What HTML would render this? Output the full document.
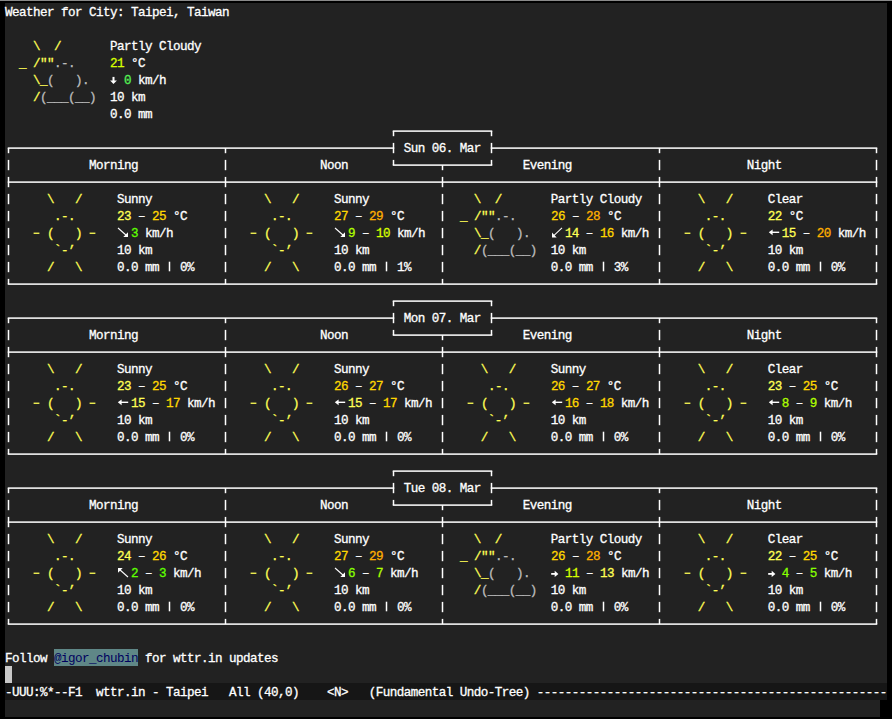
<!DOCTYPE html>
<html><head><meta charset="utf-8"><style>
html,body{margin:0;padding:0;}
body{width:892px;height:719px;background:#000;position:relative;overflow:hidden;}
#topl{position:absolute;left:0;top:0;width:892px;height:1px;background:#8a8a8a;}
#buf{position:absolute;left:5px;top:3px;width:882px;height:680px;background:#222222;}
#ml{position:absolute;left:5px;top:683px;width:882px;height:17px;background:#161616;}
#echo{position:absolute;left:5px;top:700px;width:875px;height:17px;background:#222222;}
#cur{position:absolute;left:5px;top:666px;width:7px;height:17px;background:#c8c8c8;}
#hl{position:absolute;left:54px;top:649px;width:84px;height:17px;background:#5f8787;}
.r{position:absolute;left:5px;height:17px;line-height:17px;white-space:pre;font-family:"Liberation Mono",monospace;font-size:12.6px;letter-spacing:-0.560px;color:#ffffff;font-weight:normal;-webkit-text-stroke:0.3px currentColor;}
.lk{color:#00005f;-webkit-text-stroke:0;}
#ml .r{}
svg{position:absolute;left:0;top:0;}
</style></head><body>
<div id="topl"></div><div id="buf"></div><div id="ml"></div><div id="echo"></div>
<div id="hl"></div><div id="cur"></div>
<div class="r" style="top:5px">Weather for City: Taipei, Taiwan</div>
<div class="r" style="top:39px"> <span style="color:#ffff55">   \  /      </span> Partly Cloudy</div>
<div class="r" style="top:56px"> <span style="color:#ffff55"> _ /&quot;&quot;</span><span style="color:#bcbcbc">.-.    </span> <span style="color:#d7ff00">21</span> °C</div>
<div class="r" style="top:73px"> <span style="color:#ffff55">   \_</span><span style="color:#bcbcbc">(   ).  </span>   <span style="color:#55f055">0</span> km/h</div>
<div class="r" style="top:90px"> <span style="color:#ffff55">   /</span><span style="color:#bcbcbc">(___(__) </span> 10 km</div>
<div class="r" style="top:107px"> <span style="color:#ffff55">             </span> 0.0 mm</div>
<div class="r" style="top:141px">                                                         Sun 06. Mar</div>
<div class="r" style="top:158px">            Morning                          Noon                         Evening                         Night</div>
<div class="r" style="top:192px">  <span style="color:#ffff55">    \   /    </span> Sunny            <span style="color:#ffff55">    \   /    </span> Sunny            <span style="color:#ffff55">   \  /      </span> Partly Cloudy    <span style="color:#ffff55">    \   /    </span> Clear</div>
<div class="r" style="top:209px">  <span style="color:#ffff55">     .-.     </span> <span style="color:#ffff55">23</span> – <span style="color:#ffd700">25</span> °C       <span style="color:#ffff55">     .-.     </span> <span style="color:#ffd700">27</span> – <span style="color:#ffaf00">29</span> °C       <span style="color:#ffff55"> _ /&quot;&quot;</span><span style="color:#bcbcbc">.-.    </span> <span style="color:#ffd700">26</span> – <span style="color:#ffaf00">28</span> °C       <span style="color:#ffff55">     .-.     </span> <span style="color:#ffff55">22</span> °C</div>
<div class="r" style="top:226px">  <span style="color:#ffff55">    (   )    </span>   <span style="color:#5fff00">3</span> km/h         <span style="color:#ffff55">    (   )    </span>   <span style="color:#afff00">9</span> – <span style="color:#d7ff00">10</span> km/h    <span style="color:#ffff55">   \_</span><span style="color:#bcbcbc">(   ).  </span>   <span style="color:#ffff55">14</span> – <span style="color:#ffd700">16</span> km/h   <span style="color:#ffff55">    (   )    </span>   <span style="color:#ffff55">15</span> – <span style="color:#ffaf00">20</span> km/h</div>
<div class="r" style="top:243px">  <span style="color:#ffff55">     `-’     </span> 10 km            <span style="color:#ffff55">     `-’     </span> 10 km            <span style="color:#ffff55">   /</span><span style="color:#bcbcbc">(___(__) </span> 10 km            <span style="color:#ffff55">     `-’     </span> 10 km</div>
<div class="r" style="top:260px">  <span style="color:#ffff55">    /   \    </span> 0.0 mm   0%      <span style="color:#ffff55">    /   \    </span> 0.0 mm   1%      <span style="color:#ffff55">             </span> 0.0 mm   3%      <span style="color:#ffff55">    /   \    </span> 0.0 mm   0%</div>
<div class="r" style="top:311px">                                                         Mon 07. Mar</div>
<div class="r" style="top:328px">            Morning                          Noon                         Evening                         Night</div>
<div class="r" style="top:362px">  <span style="color:#ffff55">    \   /    </span> Sunny            <span style="color:#ffff55">    \   /    </span> Sunny            <span style="color:#ffff55">    \   /    </span> Sunny            <span style="color:#ffff55">    \   /    </span> Clear</div>
<div class="r" style="top:379px">  <span style="color:#ffff55">     .-.     </span> <span style="color:#ffff55">23</span> – <span style="color:#ffd700">25</span> °C       <span style="color:#ffff55">     .-.     </span> <span style="color:#ffd700">26</span> – <span style="color:#ffd700">27</span> °C       <span style="color:#ffff55">     .-.     </span> <span style="color:#ffd700">26</span> – <span style="color:#ffd700">27</span> °C       <span style="color:#ffff55">     .-.     </span> <span style="color:#ffff55">23</span> – <span style="color:#ffd700">25</span> °C</div>
<div class="r" style="top:396px">  <span style="color:#ffff55">    (   )    </span>   <span style="color:#ffff55">15</span> – <span style="color:#ffd700">17</span> km/h   <span style="color:#ffff55">    (   )    </span>   <span style="color:#ffff55">15</span> – <span style="color:#ffd700">17</span> km/h   <span style="color:#ffff55">    (   )    </span>   <span style="color:#ffd700">16</span> – <span style="color:#ffd700">18</span> km/h   <span style="color:#ffff55">    (   )    </span>   <span style="color:#afff00">8</span> – <span style="color:#afff00">9</span> km/h</div>
<div class="r" style="top:413px">  <span style="color:#ffff55">     `-’     </span> 10 km            <span style="color:#ffff55">     `-’     </span> 10 km            <span style="color:#ffff55">     `-’     </span> 10 km            <span style="color:#ffff55">     `-’     </span> 10 km</div>
<div class="r" style="top:430px">  <span style="color:#ffff55">    /   \    </span> 0.0 mm   0%      <span style="color:#ffff55">    /   \    </span> 0.0 mm   0%      <span style="color:#ffff55">    /   \    </span> 0.0 mm   0%      <span style="color:#ffff55">    /   \    </span> 0.0 mm   0%</div>
<div class="r" style="top:481px">                                                         Tue 08. Mar</div>
<div class="r" style="top:498px">            Morning                          Noon                         Evening                         Night</div>
<div class="r" style="top:532px">  <span style="color:#ffff55">    \   /    </span> Sunny            <span style="color:#ffff55">    \   /    </span> Sunny            <span style="color:#ffff55">   \  /      </span> Partly Cloudy    <span style="color:#ffff55">    \   /    </span> Clear</div>
<div class="r" style="top:549px">  <span style="color:#ffff55">     .-.     </span> <span style="color:#ffff55">24</span> – <span style="color:#ffd700">26</span> °C       <span style="color:#ffff55">     .-.     </span> <span style="color:#ffd700">27</span> – <span style="color:#ffaf00">29</span> °C       <span style="color:#ffff55"> _ /&quot;&quot;</span><span style="color:#bcbcbc">.-.    </span> <span style="color:#ffd700">26</span> – <span style="color:#ffaf00">28</span> °C       <span style="color:#ffff55">     .-.     </span> <span style="color:#ffff55">22</span> – <span style="color:#ffd700">25</span> °C</div>
<div class="r" style="top:566px">  <span style="color:#ffff55">    (   )    </span>   <span style="color:#5fff00">2</span> – <span style="color:#5fff00">3</span> km/h     <span style="color:#ffff55">    (   )    </span>   <span style="color:#87ff00">6</span> – <span style="color:#afff00">7</span> km/h     <span style="color:#ffff55">   \_</span><span style="color:#bcbcbc">(   ).  </span>   <span style="color:#d7ff00">11</span> – <span style="color:#ffff55">13</span> km/h   <span style="color:#ffff55">    (   )    </span>   <span style="color:#87ff00">4</span> – <span style="color:#87ff00">5</span> km/h</div>
<div class="r" style="top:583px">  <span style="color:#ffff55">     `-’     </span> 10 km            <span style="color:#ffff55">     `-’     </span> 10 km            <span style="color:#ffff55">   /</span><span style="color:#bcbcbc">(___(__) </span> 10 km            <span style="color:#ffff55">     `-’     </span> 10 km</div>
<div class="r" style="top:600px">  <span style="color:#ffff55">    /   \    </span> 0.0 mm   0%      <span style="color:#ffff55">    /   \    </span> 0.0 mm   0%      <span style="color:#ffff55">             </span> 0.0 mm   0%      <span style="color:#ffff55">    /   \    </span> 0.0 mm   0%</div>
<div class="r" style="top:651px">Follow <span class="lk">@igor_chubin</span> for wttr.in updates</div>
<div class="r ml" style="top:685px">-UUU:%*--F1  wttr.in - Taipei   All (40,0)    &lt;N&gt;   (Fundamental Undo-Tree) --------------------------------------------------</div>
<svg width="892" height="719" viewBox="0 0 892 719"><g fill="#ffffff">
<rect x="392.75" y="130.35" width="99.50" height="1.5"/>
<rect x="392.75" y="131.10" width="1.5" height="5.10"/>
<rect x="490.75" y="131.10" width="1.5" height="5.10"/>
<rect x="7.75" y="147.35" width="386.50" height="1.5"/>
<rect x="490.75" y="147.35" width="386.50" height="1.5"/>
<rect x="7.75" y="148.10" width="1.5" height="5.10"/>
<rect x="224.75" y="148.10" width="1.5" height="5.10"/>
<rect x="658.75" y="148.10" width="1.5" height="5.10"/>
<rect x="875.75" y="148.10" width="1.5" height="5.10"/>
<rect x="392.75" y="142.90" width="1.5" height="10.30"/>
<rect x="490.75" y="142.90" width="1.5" height="10.30"/>
<rect x="392.75" y="164.35" width="99.50" height="1.5"/>
<rect x="392.75" y="159.90" width="1.5" height="5.20"/>
<rect x="490.75" y="159.90" width="1.5" height="5.20"/>
<rect x="441.75" y="165.10" width="1.5" height="5.10"/>
<rect x="7.75" y="159.90" width="1.5" height="10.30"/>
<rect x="224.75" y="159.90" width="1.5" height="10.30"/>
<rect x="658.75" y="159.90" width="1.5" height="10.30"/>
<rect x="875.75" y="159.90" width="1.5" height="10.30"/>
<rect x="7.75" y="181.35" width="869.50" height="1.5"/>
<rect x="7.75" y="176.90" width="1.5" height="10.30"/>
<rect x="224.75" y="176.90" width="1.5" height="10.30"/>
<rect x="441.75" y="176.90" width="1.5" height="10.30"/>
<rect x="658.75" y="176.90" width="1.5" height="10.30"/>
<rect x="875.75" y="176.90" width="1.5" height="10.30"/>
<rect x="7.75" y="193.90" width="1.5" height="10.30"/>
<rect x="224.75" y="193.90" width="1.5" height="10.30"/>
<rect x="441.75" y="193.90" width="1.5" height="10.30"/>
<rect x="658.75" y="193.90" width="1.5" height="10.30"/>
<rect x="875.75" y="193.90" width="1.5" height="10.30"/>
<rect x="7.75" y="210.90" width="1.5" height="10.30"/>
<rect x="224.75" y="210.90" width="1.5" height="10.30"/>
<rect x="441.75" y="210.90" width="1.5" height="10.30"/>
<rect x="658.75" y="210.90" width="1.5" height="10.30"/>
<rect x="875.75" y="210.90" width="1.5" height="10.30"/>
<rect x="7.75" y="227.90" width="1.5" height="10.30"/>
<rect x="224.75" y="227.90" width="1.5" height="10.30"/>
<rect x="441.75" y="227.90" width="1.5" height="10.30"/>
<rect x="658.75" y="227.90" width="1.5" height="10.30"/>
<rect x="875.75" y="227.90" width="1.5" height="10.30"/>
<rect x="7.75" y="244.90" width="1.5" height="10.30"/>
<rect x="224.75" y="244.90" width="1.5" height="10.30"/>
<rect x="441.75" y="244.90" width="1.5" height="10.30"/>
<rect x="658.75" y="244.90" width="1.5" height="10.30"/>
<rect x="875.75" y="244.90" width="1.5" height="10.30"/>
<rect x="7.75" y="261.90" width="1.5" height="10.30"/>
<rect x="224.75" y="261.90" width="1.5" height="10.30"/>
<rect x="441.75" y="261.90" width="1.5" height="10.30"/>
<rect x="658.75" y="261.90" width="1.5" height="10.30"/>
<rect x="875.75" y="261.90" width="1.5" height="10.30"/>
<rect x="7.75" y="283.35" width="869.50" height="1.5"/>
<rect x="7.75" y="278.90" width="1.5" height="5.20"/>
<rect x="224.75" y="278.90" width="1.5" height="5.20"/>
<rect x="441.75" y="278.90" width="1.5" height="5.20"/>
<rect x="658.75" y="278.90" width="1.5" height="5.20"/>
<rect x="875.75" y="278.90" width="1.5" height="5.20"/>
<rect x="392.75" y="300.35" width="99.50" height="1.5"/>
<rect x="392.75" y="301.10" width="1.5" height="5.10"/>
<rect x="490.75" y="301.10" width="1.5" height="5.10"/>
<rect x="7.75" y="317.35" width="386.50" height="1.5"/>
<rect x="490.75" y="317.35" width="386.50" height="1.5"/>
<rect x="7.75" y="318.10" width="1.5" height="5.10"/>
<rect x="224.75" y="318.10" width="1.5" height="5.10"/>
<rect x="658.75" y="318.10" width="1.5" height="5.10"/>
<rect x="875.75" y="318.10" width="1.5" height="5.10"/>
<rect x="392.75" y="312.90" width="1.5" height="10.30"/>
<rect x="490.75" y="312.90" width="1.5" height="10.30"/>
<rect x="392.75" y="334.35" width="99.50" height="1.5"/>
<rect x="392.75" y="329.90" width="1.5" height="5.20"/>
<rect x="490.75" y="329.90" width="1.5" height="5.20"/>
<rect x="441.75" y="335.10" width="1.5" height="5.10"/>
<rect x="7.75" y="329.90" width="1.5" height="10.30"/>
<rect x="224.75" y="329.90" width="1.5" height="10.30"/>
<rect x="658.75" y="329.90" width="1.5" height="10.30"/>
<rect x="875.75" y="329.90" width="1.5" height="10.30"/>
<rect x="7.75" y="351.35" width="869.50" height="1.5"/>
<rect x="7.75" y="346.90" width="1.5" height="10.30"/>
<rect x="224.75" y="346.90" width="1.5" height="10.30"/>
<rect x="441.75" y="346.90" width="1.5" height="10.30"/>
<rect x="658.75" y="346.90" width="1.5" height="10.30"/>
<rect x="875.75" y="346.90" width="1.5" height="10.30"/>
<rect x="7.75" y="363.90" width="1.5" height="10.30"/>
<rect x="224.75" y="363.90" width="1.5" height="10.30"/>
<rect x="441.75" y="363.90" width="1.5" height="10.30"/>
<rect x="658.75" y="363.90" width="1.5" height="10.30"/>
<rect x="875.75" y="363.90" width="1.5" height="10.30"/>
<rect x="7.75" y="380.90" width="1.5" height="10.30"/>
<rect x="224.75" y="380.90" width="1.5" height="10.30"/>
<rect x="441.75" y="380.90" width="1.5" height="10.30"/>
<rect x="658.75" y="380.90" width="1.5" height="10.30"/>
<rect x="875.75" y="380.90" width="1.5" height="10.30"/>
<rect x="7.75" y="397.90" width="1.5" height="10.30"/>
<rect x="224.75" y="397.90" width="1.5" height="10.30"/>
<rect x="441.75" y="397.90" width="1.5" height="10.30"/>
<rect x="658.75" y="397.90" width="1.5" height="10.30"/>
<rect x="875.75" y="397.90" width="1.5" height="10.30"/>
<rect x="7.75" y="414.90" width="1.5" height="10.30"/>
<rect x="224.75" y="414.90" width="1.5" height="10.30"/>
<rect x="441.75" y="414.90" width="1.5" height="10.30"/>
<rect x="658.75" y="414.90" width="1.5" height="10.30"/>
<rect x="875.75" y="414.90" width="1.5" height="10.30"/>
<rect x="7.75" y="431.90" width="1.5" height="10.30"/>
<rect x="224.75" y="431.90" width="1.5" height="10.30"/>
<rect x="441.75" y="431.90" width="1.5" height="10.30"/>
<rect x="658.75" y="431.90" width="1.5" height="10.30"/>
<rect x="875.75" y="431.90" width="1.5" height="10.30"/>
<rect x="7.75" y="453.35" width="869.50" height="1.5"/>
<rect x="7.75" y="448.90" width="1.5" height="5.20"/>
<rect x="224.75" y="448.90" width="1.5" height="5.20"/>
<rect x="441.75" y="448.90" width="1.5" height="5.20"/>
<rect x="658.75" y="448.90" width="1.5" height="5.20"/>
<rect x="875.75" y="448.90" width="1.5" height="5.20"/>
<rect x="392.75" y="470.35" width="99.50" height="1.5"/>
<rect x="392.75" y="471.10" width="1.5" height="5.10"/>
<rect x="490.75" y="471.10" width="1.5" height="5.10"/>
<rect x="7.75" y="487.35" width="386.50" height="1.5"/>
<rect x="490.75" y="487.35" width="386.50" height="1.5"/>
<rect x="7.75" y="488.10" width="1.5" height="5.10"/>
<rect x="224.75" y="488.10" width="1.5" height="5.10"/>
<rect x="658.75" y="488.10" width="1.5" height="5.10"/>
<rect x="875.75" y="488.10" width="1.5" height="5.10"/>
<rect x="392.75" y="482.90" width="1.5" height="10.30"/>
<rect x="490.75" y="482.90" width="1.5" height="10.30"/>
<rect x="392.75" y="504.35" width="99.50" height="1.5"/>
<rect x="392.75" y="499.90" width="1.5" height="5.20"/>
<rect x="490.75" y="499.90" width="1.5" height="5.20"/>
<rect x="441.75" y="505.10" width="1.5" height="5.10"/>
<rect x="7.75" y="499.90" width="1.5" height="10.30"/>
<rect x="224.75" y="499.90" width="1.5" height="10.30"/>
<rect x="658.75" y="499.90" width="1.5" height="10.30"/>
<rect x="875.75" y="499.90" width="1.5" height="10.30"/>
<rect x="7.75" y="521.35" width="869.50" height="1.5"/>
<rect x="7.75" y="516.90" width="1.5" height="10.30"/>
<rect x="224.75" y="516.90" width="1.5" height="10.30"/>
<rect x="441.75" y="516.90" width="1.5" height="10.30"/>
<rect x="658.75" y="516.90" width="1.5" height="10.30"/>
<rect x="875.75" y="516.90" width="1.5" height="10.30"/>
<rect x="7.75" y="533.90" width="1.5" height="10.30"/>
<rect x="224.75" y="533.90" width="1.5" height="10.30"/>
<rect x="441.75" y="533.90" width="1.5" height="10.30"/>
<rect x="658.75" y="533.90" width="1.5" height="10.30"/>
<rect x="875.75" y="533.90" width="1.5" height="10.30"/>
<rect x="7.75" y="550.90" width="1.5" height="10.30"/>
<rect x="224.75" y="550.90" width="1.5" height="10.30"/>
<rect x="441.75" y="550.90" width="1.5" height="10.30"/>
<rect x="658.75" y="550.90" width="1.5" height="10.30"/>
<rect x="875.75" y="550.90" width="1.5" height="10.30"/>
<rect x="7.75" y="567.90" width="1.5" height="10.30"/>
<rect x="224.75" y="567.90" width="1.5" height="10.30"/>
<rect x="441.75" y="567.90" width="1.5" height="10.30"/>
<rect x="658.75" y="567.90" width="1.5" height="10.30"/>
<rect x="875.75" y="567.90" width="1.5" height="10.30"/>
<rect x="7.75" y="584.90" width="1.5" height="10.30"/>
<rect x="224.75" y="584.90" width="1.5" height="10.30"/>
<rect x="441.75" y="584.90" width="1.5" height="10.30"/>
<rect x="658.75" y="584.90" width="1.5" height="10.30"/>
<rect x="875.75" y="584.90" width="1.5" height="10.30"/>
<rect x="7.75" y="601.90" width="1.5" height="10.30"/>
<rect x="224.75" y="601.90" width="1.5" height="10.30"/>
<rect x="441.75" y="601.90" width="1.5" height="10.30"/>
<rect x="658.75" y="601.90" width="1.5" height="10.30"/>
<rect x="875.75" y="601.90" width="1.5" height="10.30"/>
<rect x="7.75" y="623.35" width="869.50" height="1.5"/>
<rect x="7.75" y="618.90" width="1.5" height="5.20"/>
<rect x="224.75" y="618.90" width="1.5" height="5.20"/>
<rect x="441.75" y="618.90" width="1.5" height="5.20"/>
<rect x="658.75" y="618.90" width="1.5" height="5.20"/>
<rect x="875.75" y="618.90" width="1.5" height="5.20"/>
<rect x="168.75" y="261.70" width="1.5" height="9.6"/>
<rect x="385.75" y="261.70" width="1.5" height="9.6"/>
<rect x="602.75" y="261.70" width="1.5" height="9.6"/>
<rect x="819.75" y="261.70" width="1.5" height="9.6"/>
<rect x="168.75" y="431.70" width="1.5" height="9.6"/>
<rect x="385.75" y="431.70" width="1.5" height="9.6"/>
<rect x="602.75" y="431.70" width="1.5" height="9.6"/>
<rect x="819.75" y="431.70" width="1.5" height="9.6"/>
<rect x="168.75" y="601.70" width="1.5" height="9.6"/>
<rect x="385.75" y="601.70" width="1.5" height="9.6"/>
<rect x="602.75" y="601.70" width="1.5" height="9.6"/>
<rect x="819.75" y="601.70" width="1.5" height="9.6"/>
<rect x="33.60" y="232.60" width="5.8" height="1.3" fill="#ffff55"/>
<rect x="89.60" y="232.60" width="5.8" height="1.3" fill="#ffff55"/>
<rect x="250.60" y="232.60" width="5.8" height="1.3" fill="#ffff55"/>
<rect x="306.60" y="232.60" width="5.8" height="1.3" fill="#ffff55"/>
<rect x="684.60" y="232.60" width="5.8" height="1.3" fill="#ffff55"/>
<rect x="740.60" y="232.60" width="5.8" height="1.3" fill="#ffff55"/>
<rect x="33.60" y="402.60" width="5.8" height="1.3" fill="#ffff55"/>
<rect x="89.60" y="402.60" width="5.8" height="1.3" fill="#ffff55"/>
<rect x="250.60" y="402.60" width="5.8" height="1.3" fill="#ffff55"/>
<rect x="306.60" y="402.60" width="5.8" height="1.3" fill="#ffff55"/>
<rect x="467.60" y="402.60" width="5.8" height="1.3" fill="#ffff55"/>
<rect x="523.60" y="402.60" width="5.8" height="1.3" fill="#ffff55"/>
<rect x="684.60" y="402.60" width="5.8" height="1.3" fill="#ffff55"/>
<rect x="740.60" y="402.60" width="5.8" height="1.3" fill="#ffff55"/>
<rect x="33.60" y="572.60" width="5.8" height="1.3" fill="#ffff55"/>
<rect x="89.60" y="572.60" width="5.8" height="1.3" fill="#ffff55"/>
<rect x="250.60" y="572.60" width="5.8" height="1.3" fill="#ffff55"/>
<rect x="306.60" y="572.60" width="5.8" height="1.3" fill="#ffff55"/>
<rect x="684.60" y="572.60" width="5.8" height="1.3" fill="#ffff55"/>
<rect x="740.60" y="572.60" width="5.8" height="1.3" fill="#ffff55"/>
</g><g stroke-linecap="butt">
<rect x="112.50" y="76.90" width="2" height="4.6" fill="#ffffff"/><path d="M110.10 80.60L116.90 80.60L113.50 84.00Z" fill="#ffffff"/>
<path d="M118.00 228.00L126.50 235.50" stroke="#ffffff" stroke-width="1.05"/><path d="M128.00 237.00L128.00 232.30L123.30 237.00Z" fill="#ffffff"/>
<path d="M335.00 228.00L343.50 235.50" stroke="#ffffff" stroke-width="1.05"/><path d="M345.00 237.00L345.00 232.30L340.30 237.00Z" fill="#ffffff"/>
<path d="M562.00 227.80L553.50 235.90" stroke="#ffffff" stroke-width="1.05"/><path d="M552.00 237.40L552.00 232.60L556.70 237.40Z" fill="#ffffff"/>
<rect x="771.50" y="231.60" width="7.70" height="1.4" fill="#ffffff"/><path d="M768.80 232.30L772.60 229.40L772.60 235.20Z" fill="#ffffff"/>
<rect x="120.50" y="401.60" width="7.70" height="1.4" fill="#ffffff"/><path d="M117.80 402.30L121.60 399.40L121.60 405.20Z" fill="#ffffff"/>
<rect x="337.50" y="401.60" width="7.70" height="1.4" fill="#ffffff"/><path d="M334.80 402.30L338.60 399.40L338.60 405.20Z" fill="#ffffff"/>
<rect x="554.50" y="401.60" width="7.70" height="1.4" fill="#ffffff"/><path d="M551.80 402.30L555.60 399.40L555.60 405.20Z" fill="#ffffff"/>
<rect x="771.50" y="401.60" width="7.70" height="1.4" fill="#ffffff"/><path d="M768.80 402.30L772.60 399.40L772.60 405.20Z" fill="#ffffff"/>
<path d="M128.00 577.00L119.50 569.50" stroke="#ffffff" stroke-width="1.05"/><path d="M118.00 568.00L122.70 568.00L118.00 572.70Z" fill="#ffffff"/>
<path d="M335.00 568.00L343.50 575.50" stroke="#ffffff" stroke-width="1.05"/><path d="M345.00 577.00L345.00 572.30L340.30 577.00Z" fill="#ffffff"/>
<rect x="551.20" y="573.00" width="4.5" height="1.8" fill="#ffffff"/><path d="M554.70 570.80L558.40 573.90L554.70 577.00Z" fill="#ffffff"/>
<rect x="768.20" y="573.00" width="4.5" height="1.8" fill="#ffffff"/><path d="M771.70 570.80L775.40 573.90L771.70 577.00Z" fill="#ffffff"/>
</g></svg>
</body></html>
